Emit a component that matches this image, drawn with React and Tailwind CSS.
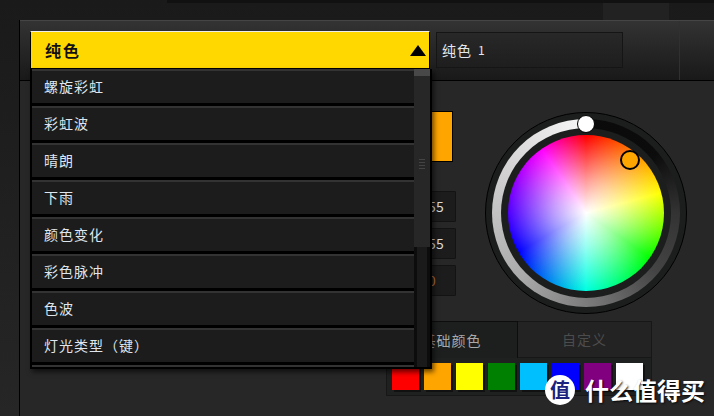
import React from 'react';

const effects = ['螺旋彩虹', '彩虹波', '晴朗', '下雨', '颜色变化', '彩色脉冲', '色波', '灯光类型（键）'];
const swatches = ['bg-[#ff0000]', 'bg-[#ffa500]', 'bg-[#ffff00]', 'bg-[#008000]', 'bg-[#00bfff]', 'bg-[#0000ff]', 'bg-[#800080]', 'bg-[#ffffff]'];
const values = ['255', '255', '0'];

const font = { fontFamily: '"Noto Sans CJK SC", "Liberation Sans", sans-serif' };

const ColorWheel = () => (
  <div className="relative flex h-[202px] w-[202px] items-center justify-center rounded-full border border-black bg-[#1c1e1e]">
    {/* brightness ring */}
    <div className="flex h-[188px] w-[188px] items-center justify-center rounded-full bg-[conic-gradient(#0a0a0a_0deg,#0c0c0c_50deg,#333_90deg,#444_130deg,#777_175deg,#aaa_225deg,#c8c8c8_280deg,#f4f4f4_355deg,#0a0a0a_360deg)]">
      <div className="flex h-[170px] w-[170px] items-center justify-center rounded-full bg-[#1c1e1e]">
        {/* hue disc */}
        <div className="relative h-[156px] w-[156px] overflow-hidden rounded-full bg-[conic-gradient(#ff0000,#ffff00_75deg,#00ff00_125deg,#00ffe0_180deg,#0000ff_240deg,#8000ff_288deg,#ff00ff_325deg,#ff0000)]">
          <div className="absolute inset-0 rounded-full bg-[radial-gradient(circle,#ffffff_0%,rgba(255,255,255,0.6)_30%,rgba(255,255,255,0)_70%)]" />
        </div>
      </div>
    </div>
    {/* handles */}
    <div className="absolute left-[91px] top-[2px] h-[18px] w-[18px] rounded-full border border-black bg-white" />
    <div className="absolute left-[134px] top-[37px] h-[20px] w-[20px] rounded-full border-2 border-black bg-[#ffa500]" />
  </div>
);

const App = () => {
  return (
    <div className="relative h-[416px] w-[714px] overflow-hidden bg-gradient-to-b from-[#1a1a1a] to-[#262626] pl-[19px] pt-5" style={font}>
      {/* darker shapes of the page background */}
      <div className="absolute left-[167px] top-0 h-[3px] w-[547px] bg-[#111]" />
      <div className="absolute left-[603px] top-[3px] h-[17px] w-[66px] bg-[#222]" />

      <div className="flex h-[396px] flex-col border-l border-black bg-[#272727]">
        {/* header */}
        <div className="flex h-[61px] border-b border-t border-b-black border-t-[#454545] bg-gradient-to-b from-[#333333] to-[#191919] pl-[416px] pt-[11px]">
          <div className="flex h-[36px] w-[187px] items-center gap-[6px] border border-[#151515] bg-gradient-to-b from-[#282828] to-[#1e1e1e] pl-[5px] text-[14px] tracking-[1px] text-[#e4e8ec]">
            <span>纯色</span>
            <span className="text-[12px]">1</span>
          </div>
          <div className="ml-[56px] h-[59px] -mt-[11px] w-px bg-[#303030]" />
        </div>

        {/* body */}
        <div className="flex flex-col">
          <div className="flex pl-[399px] pt-[30px]">
            <div className="flex w-[37px] flex-col">
              <div className="ml-[12px] h-[51px] w-[22px] border border-black bg-[#ffa500]" />
              <div className="mt-[29px] flex flex-col gap-[6px]">
                {values.map((v, i) => (
                  <div key={i} className={`flex h-[31px] items-center justify-center rounded-[1px] border border-[#131313] bg-[#1c1c1c] pr-[11px] text-[14px] ${i === 2 ? 'text-[#b5743c]' : 'text-[#d8d8d8]'}`}>
                    {v}
                  </div>
                ))}
              </div>
            </div>
            <div className="ml-[29px] mt-px">
              <ColorWheel />
            </div>
          </div>

          {/* color tabs */}
          <div className="ml-[366px] mt-[7px] w-[266px]">
            <div className="flex h-[37px]">
              <div className="flex w-[132px] items-center justify-center border-r border-t border-[#0d0d0d] bg-[#1d1f1f] text-[14px] tracking-[1px] text-[#a8a8a8]">基础颜色</div>
              <div className="flex flex-1 items-center justify-center border-b border-r border-t border-[#171717] bg-[#232323] text-[14px] tracking-[1px] text-[#4c4c4c]">自定义</div>
            </div>
            <div className="flex h-[38px] gap-[5px] border border-t-0 border-[#171717] bg-[#1f2020] pl-[5px] pt-[5px]">
              {swatches.map((c) => (
                <div key={c} className={`h-[27px] w-[27px] shadow-[2px_2px_0_#111] ${c}`} />
              ))}
            </div>
          </div>
        </div>
      </div>

      {/* effect dropdown, open over the panel */}
      <div className="absolute left-[30px] top-[31px] w-[402px]">
        <div className="mr-[2px] flex h-[38px] items-center justify-between border border-black border-t-[#eeeeee] bg-[#ffd800] pl-[14px] pr-[3px] text-[16px] font-bold tracking-[2px] text-[#111]">
          <span>纯色</span>
          <svg width="16" height="11" viewBox="0 0 16 11">
            <polygon points="8,0 16,11 0,11" fill="#000" />
          </svg>
        </div>
        <div className="flex h-[300px] overflow-hidden border-x-2 border-b-2 border-black bg-black shadow-[2px_3px_5px_rgba(0,0,0,0.6)]">
          <div className="flex min-w-0 flex-1 flex-col">
            {effects.map((name) => (
              <div key={name} className="flex h-[37px] shrink-0 items-center border-b-[3px] border-t-2 border-b-black border-t-[#333] bg-[#1c1c1c] pb-px pl-[12px] text-[14px] tracking-[1px] text-[#dfe6ee]">
                {name}
              </div>
            ))}
            <div className="h-[3px] shrink-0 border-t-2 border-[#333]" />
          </div>
          {/* scrollbar */}
          <div className="flex w-[16px] shrink-0 flex-col bg-[#0c0c0c]">
            <div className="flex h-[178px] shrink-0 flex-col items-center justify-center border-t-[7px] border-[#484848] bg-[#272727] pb-[6px]">
              <div className="mt-[10px] flex flex-col gap-[2px]">
                <div className="h-px w-[6px] bg-[#444]" />
                <div className="h-px w-[6px] bg-[#444]" />
                <div className="h-px w-[6px] bg-[#444]" />
                <div className="h-px w-[6px] bg-[#444]" />
              </div>
            </div>
            <div className="mx-[3px] flex-1 bg-[#1a1a1a]" />
          </div>
        </div>
      </div>

      {/* site watermark */}
      <div className="absolute left-[545px] top-[375px] flex items-center gap-[10px]">
        <div className="flex h-[30px] w-[30px] items-center justify-center rounded-full bg-white text-[20px] font-bold text-[#1a237e]">值</div>
        <span className="text-[24px] font-bold leading-none text-white [text-shadow:1px_1px_2px_rgba(0,0,0,0.8)]">什么值得买</span>
      </div>
    </div>
  );
};

export default App;
